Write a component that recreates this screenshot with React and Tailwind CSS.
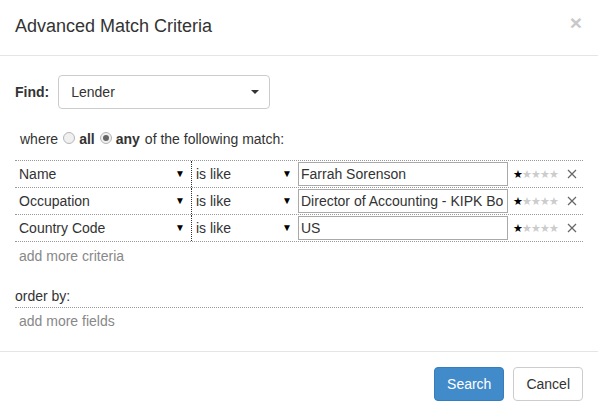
import React from "react";

const rows = [
  { field: "Name", op: "is like", value: "Farrah Sorenson" },
  { field: "Occupation", op: "is like", value: "Director of Accounting - KIPK Bo" },
  { field: "Country Code", op: "is like", value: "US" },
];

function Stars() {
  return (
    <span className="text-[11px] leading-none tracking-[-1px]">
      <span className="text-black">★</span>
      <span className="text-[#ccc]">★★★★</span>
    </span>
  );
}

function XIcon() {
  return (
    <svg width="10" height="10" viewBox="0 0 10 10" className="text-[#666]">
      <path d="M1 1L9 9M9 1L1 9" stroke="currentColor" strokeWidth="1.2" />
    </svg>
  );
}

function Radio({ checked }) {
  return (
    <span className="inline-flex w-[12px] h-[12px] rounded-full border border-[#b5b5b5] bg-[#f0f0f0] items-center justify-center ml-[5px] mr-[4px] relative top-[-1px]">
      {checked && <span className="w-[6px] h-[6px] rounded-full bg-[#666]" />}
    </span>
  );
}

export default function App() {
  return (
    <div
      className="w-[598px] h-[416px] bg-white text-[#333] text-[14px] leading-[20px] flex flex-col"
      style={{ fontFamily: '"Liberation Sans", Arial, sans-serif' }}
    >
      <div className="h-[56px] border-b border-[#e5e5e5] px-[15px] flex items-center justify-between">
        <h4 className="text-[18px] leading-[25px] mt-[-2px]">Advanced Match Criteria</h4>
        <span className="text-[21px] font-bold text-[#c8c8c8] leading-none mt-[-10px] mr-[1px]">×</span>
      </div>

      <div className="flex-1 px-[15px] pt-[19px]">
        <div className="flex items-center gap-[9px]">
          <span className="font-bold">Find:</span>
          <div className="w-[212px] h-[34px] border border-[#ccc] rounded-[4px] flex items-center justify-between pl-[12px] pr-[10px]">
            <span>Lender</span>
            <span className="w-0 h-0 border-l-[4px] border-r-[4px] border-t-[4px] border-l-transparent border-r-transparent border-t-[#333]" />
          </div>
        </div>

        <div className="mt-[20px] pl-[5px] flex items-center h-[20px]">
          <span>where</span>
          <Radio />
          <span className="font-bold">all</span>
          <Radio checked />
          <span className="font-bold">any</span>
          <span className="ml-[5px]">of the following match:</span>
        </div>

        <div className="mt-[11px] w-[568px] border-t border-dotted border-[#999]">
          {rows.map((r) => (
            <div key={r.field} className="flex h-[27px] border-b border-dotted border-[#999]">
              <div className="w-[177px] flex items-center justify-between pl-[4px] pr-[6px] border-r border-dotted border-[#333]">
                <span>{r.field}</span>
                <span className="text-[10px] text-black">▼</span>
              </div>
              <div className="w-[106px] flex items-center justify-between pl-[4px] pr-[6px]">
                <span>{r.op}</span>
                <span className="text-[10px] text-black">▼</span>
              </div>
              <div className="w-[210px] py-[1px]">
                <div className="h-full border border-[#a9a9a9] px-[2px] flex items-center overflow-hidden whitespace-nowrap">
                  <span className="truncate">{r.value}</span>
                </div>
              </div>
              <div className="flex-1 flex items-center pl-[5px] pr-[6px] justify-between">
                <Stars />
                <XIcon />
              </div>
            </div>
          ))}
        </div>

        <div className="mt-[4px] pl-[4px] text-[#888]">add more criteria</div>

        <div className="mt-[20px] w-[568px] border-b border-dotted border-[#999] pb-[1px]">order by:</div>
        <div className="mt-[3px] pl-[4px] text-[#888]">add more fields</div>
      </div>

      <div className="h-[65px] border-t border-[#e5e5e5] px-[15px] flex items-center justify-end gap-[9px]">
        <button className="h-[34px] px-[12px] rounded-[4px] bg-[#428bca] border border-[#357ebd] text-white">Search</button>
        <button className="h-[34px] px-[12px] rounded-[4px] bg-white border border-[#ccc] text-[#333]">Cancel</button>
      </div>
    </div>
  );
}
